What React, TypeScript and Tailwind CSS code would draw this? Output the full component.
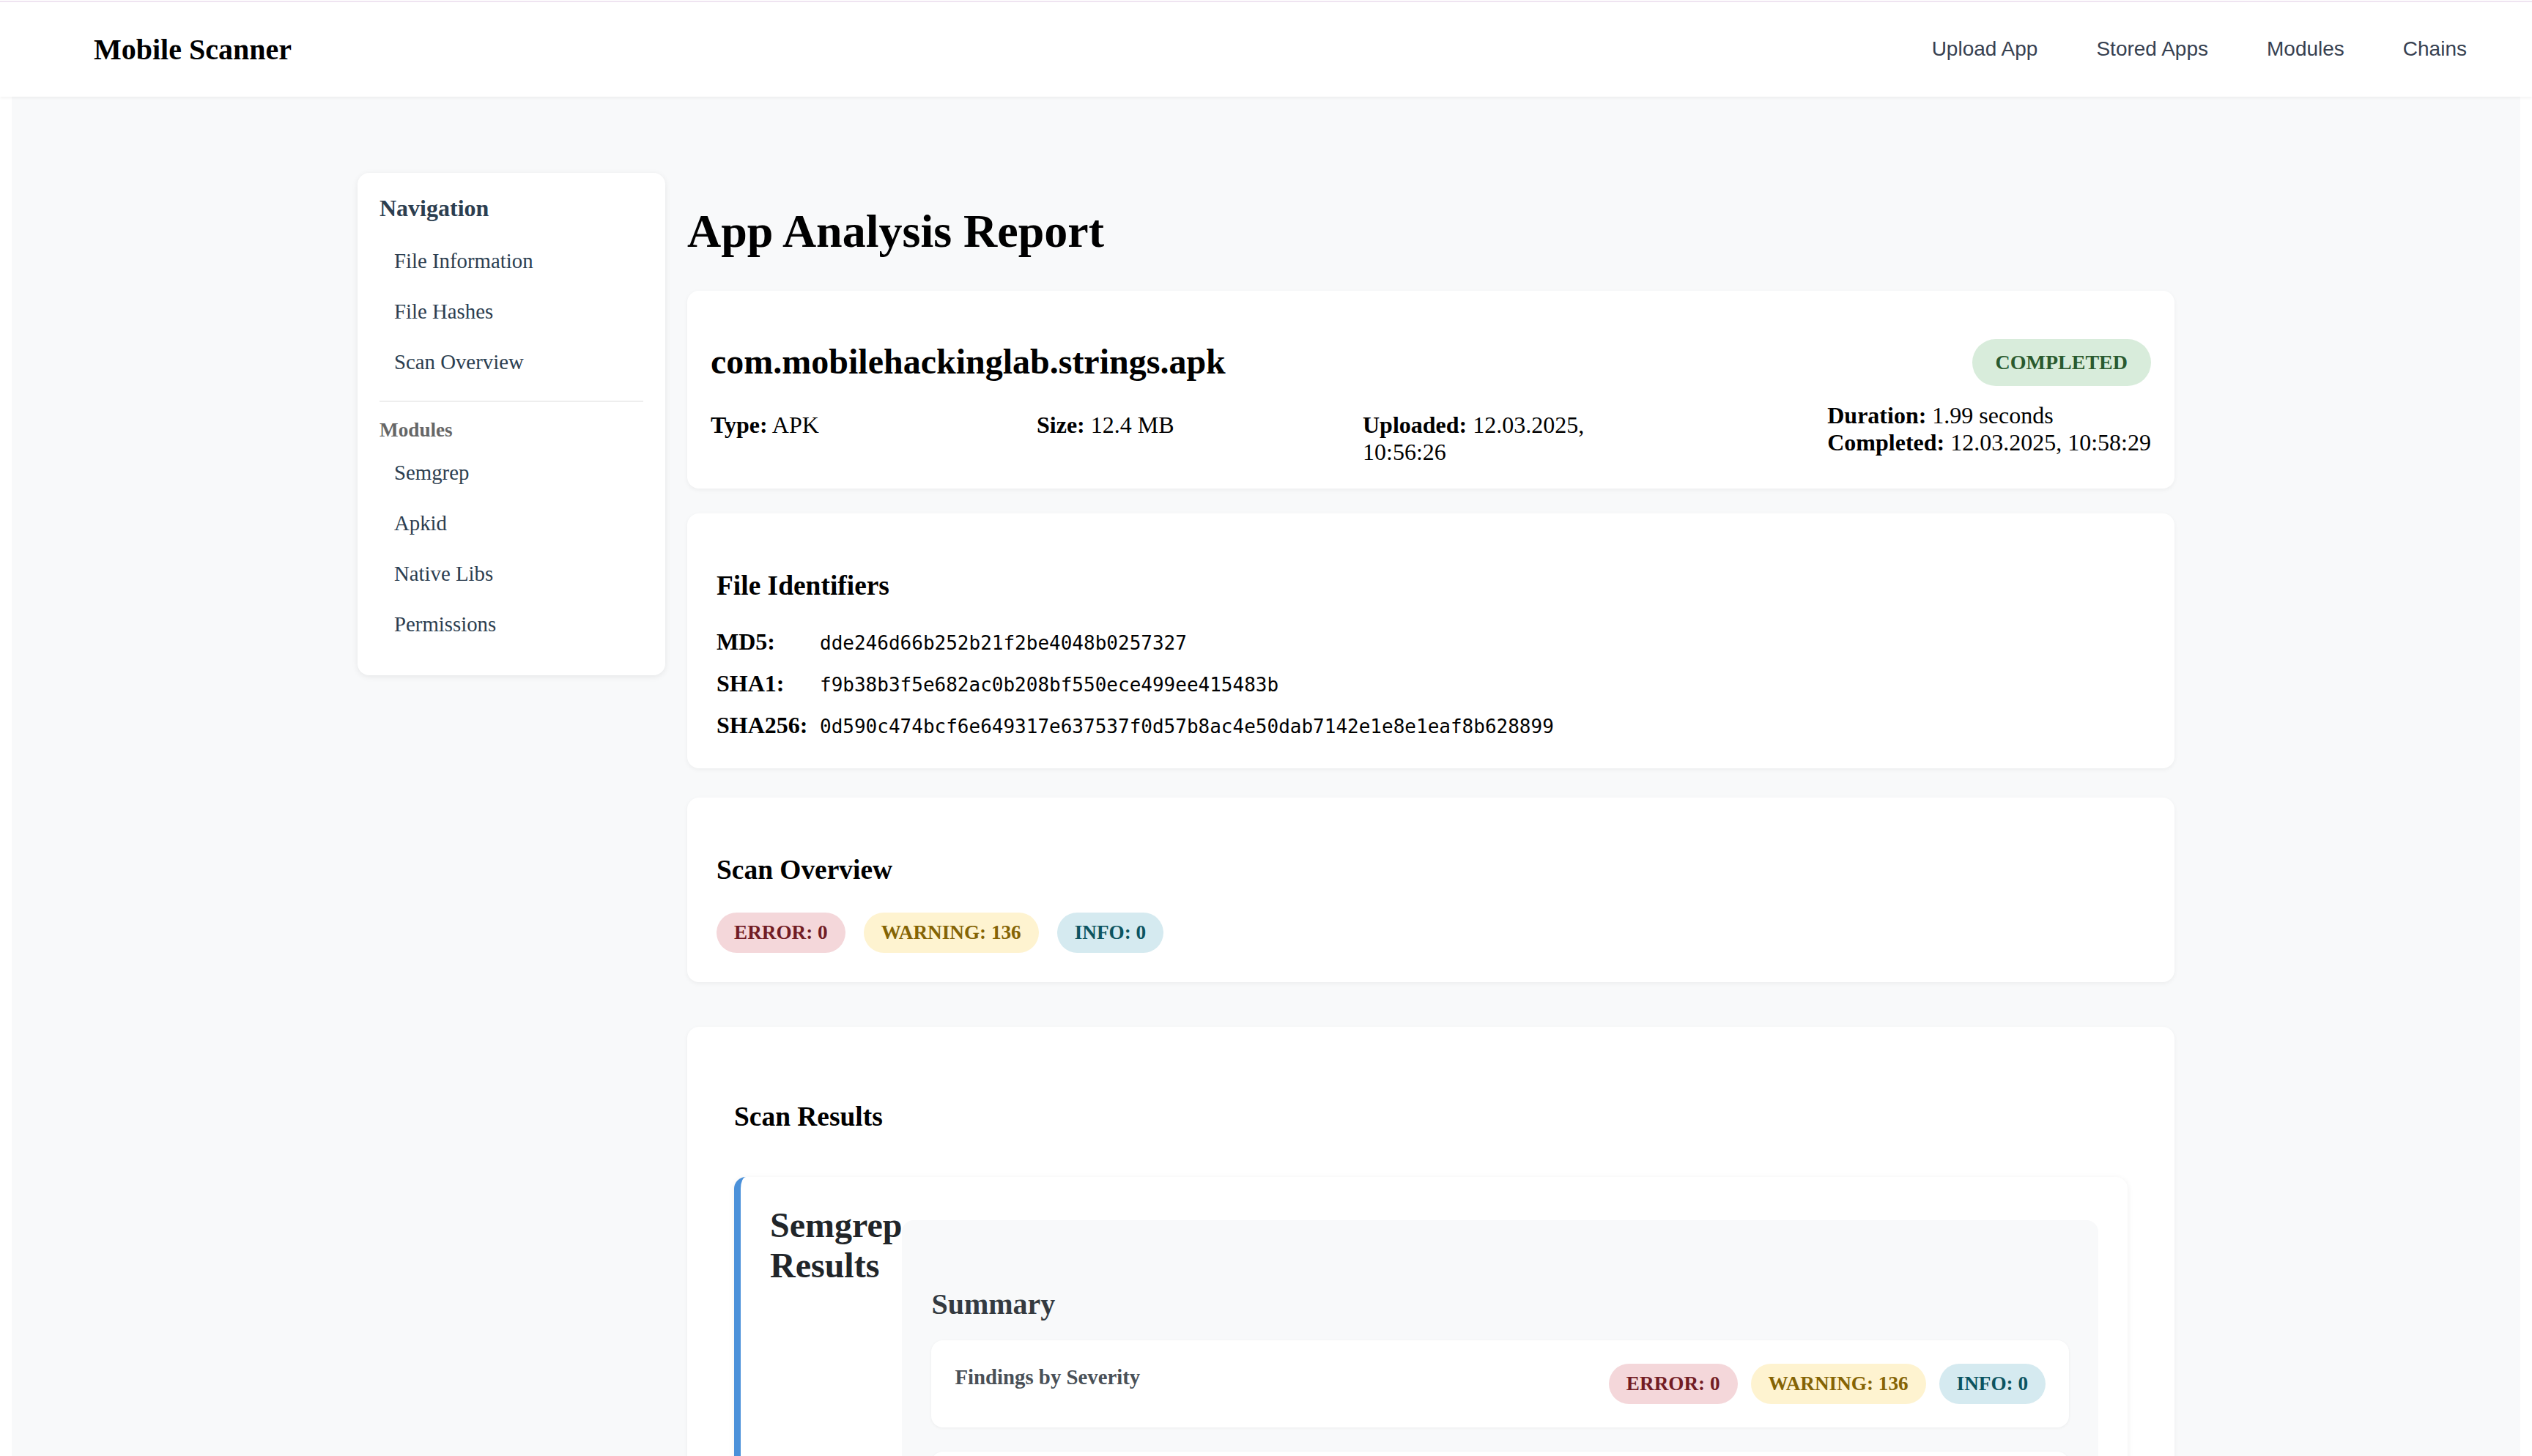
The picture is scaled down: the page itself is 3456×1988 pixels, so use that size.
import React from 'react';

type Tone = 'error' | 'warning' | 'info';

const toneClasses: Record<Tone, string> = {
  error: 'bg-[#f4d7da] text-[#721c24]',
  warning: 'bg-[#fef3d0] text-[#856404]',
  info: 'bg-[#d5eaf0] text-[#0c5460]',
};

const SeverityBadge: React.FC<{ tone: Tone; children: React.ReactNode }> = ({ tone, children }) => (
  <span className={`rounded-full px-[24px] py-[12px] text-[27.2px] font-bold leading-[1.15] ${toneClasses[tone]}`}>
    {children}
  </span>
);

const navLinks = ['Upload App', 'Stored Apps', 'Modules', 'Chains'];
const reportLinks = ['File Information', 'File Hashes', 'Scan Overview'];
const moduleLinks = ['Semgrep', 'Apkid', 'Native Libs', 'Permissions'];

const hashes = [
  { label: 'MD5:', value: 'dde246d66b252b21f2be4048b0257327' },
  { label: 'SHA1:', value: 'f9b38b3f5e682ac0b208bf550ece499ee415483b' },
  { label: 'SHA256:', value: '0d590c474bcf6e649317e637537f0d57b8ac4e50dab7142e1e8e1eaf8b628899' },
];

const Sidebar: React.FC = () => (
  <aside className="self-start rounded-2xl bg-white px-[30px] pt-[30px] pb-[35px] shadow-[0_2px_8px_rgba(0,0,0,0.08)]">
    <h3 className="text-[32px] font-bold leading-[1.15] text-[#2c3e50]">Navigation</h3>
    <ul className="mt-[19px]">
      {reportLinks.map((item) => (
        <li key={item} className="pl-[20px] text-[28.8px] leading-[69px] text-[#2c3e50]">
          {item}
        </li>
      ))}
    </ul>
    <div className="mt-[18px] h-[2px] bg-[#eeeeee]" />
    <h4 className="mt-[23px] text-[27.2px] font-bold leading-[1.15] text-[#666666]">Modules</h4>
    <ul className="mt-[8px]">
      {moduleLinks.map((item) => (
        <li key={item} className="pl-[20px] text-[28.8px] leading-[69px] text-[#2c3e50]">
          {item}
        </li>
      ))}
    </ul>
  </aside>
);

const App: React.FC = () => {
  return (
    <div className="h-screen overflow-hidden bg-white font-['Liberation_Serif',serif] text-black">
      {/* top bar */}
      <header className="relative z-10 bg-white shadow-[0_2px_4px_rgba(0,0,0,0.05)]">
        <div className="h-[1px] bg-white" />
        <div className="h-[2px] bg-[#efe4f1]" />
        <div className="flex h-[129px] items-center justify-between pl-[128px] pr-[89px]">
          <h1 className="text-[40px] font-bold leading-[1.15]">Mobile Scanner</h1>
          <nav className="flex gap-[80px] font-['Liberation_Sans',Arial,sans-serif] text-[28px] leading-[1.15] text-[#374151]">
            {navLinks.map((link) => (
              <a key={link} href="#">
                {link}
              </a>
            ))}
          </nav>
        </div>
      </header>

      <div className="mx-[16px] min-h-full bg-[#f8f9fa] pt-[104px]">
        <div className="mx-auto grid w-[2480px] grid-cols-[420px_1fr] gap-[30px]">
          <Sidebar />

          <main>
            <h1 className="mt-[43px] mb-[44px] text-[64px] font-bold leading-[1.15]">App Analysis Report</h1>

            {/* file information */}
            <section className="mb-[34px] rounded-2xl bg-white p-[32px] shadow-[0_2px_6px_rgba(0,0,0,0.05)]">
              <div className="flex items-center justify-between">
                <h2 className="mt-[37px] mb-[41px] text-[48px] font-bold leading-[1.15]">
                  com.mobilehackinglab.strings.apk
                </h2>
                <span className="rounded-full bg-[#d8ecdb] px-[32px] py-[16px] text-[28px] font-bold leading-[1.15] text-[#2a5a2e]">
                  COMPLETED
                </span>
              </div>
              <div className="flex items-start justify-between text-[32px] leading-[1.15]">
                <div className="flex gap-[45px]">
                  <div className="w-[400px]">
                    <strong>Type:</strong> APK
                  </div>
                  <div className="w-[400px]">
                    <strong>Size:</strong> 12.4 MB
                  </div>
                  <div className="w-[400px]">
                    <strong>Uploaded:</strong> 12.03.2025, 10:56:26
                  </div>
                </div>
                <div className="-mt-[13px]">
                  <div>
                    <strong>Duration:</strong> 1.99 seconds
                  </div>
                  <div>
                    <strong>Completed:</strong> 12.03.2025, 10:58:29
                  </div>
                </div>
              </div>
            </section>

            {/* hashes */}
            <section className="mb-[40px] rounded-2xl bg-white p-[40px] shadow-[0_2px_6px_rgba(0,0,0,0.05)]">
              <h3 className="my-[37px] text-[37.44px] font-bold leading-[1.15]">File Identifiers</h3>
              <div className="flex flex-col gap-[20px]">
                {hashes.map((h) => (
                  <div key={h.label} className="flex items-baseline">
                    <span className="w-[141px] shrink-0 text-[32px] font-bold leading-[1.15]">{h.label}</span>
                    <code className="font-['DejaVu_Sans_Mono',monospace] text-[26px] leading-[1.15]">{h.value}</code>
                  </div>
                ))}
              </div>
            </section>

            {/* overview */}
            <section className="mb-[61px] rounded-2xl bg-white p-[40px] shadow-[0_2px_6px_rgba(0,0,0,0.05)]">
              <h3 className="my-[37px] text-[37.44px] font-bold leading-[1.15]">Scan Overview</h3>
              <div className="flex gap-[25px]">
                <SeverityBadge tone="error">ERROR: 0</SeverityBadge>
                <SeverityBadge tone="warning">WARNING: 136</SeverityBadge>
                <SeverityBadge tone="info">INFO: 0</SeverityBadge>
              </div>
            </section>

            {/* results */}
            <section className="rounded-2xl bg-white px-[64px] pt-[64px] pb-[64px] shadow-[0_2px_6px_rgba(0,0,0,0.05)]">
              <h3 className="mt-[37px] mb-[61px] text-[37.44px] font-bold leading-[1.15]">Scan Results</h3>

              <div className="flex items-start rounded-2xl border-l-[9px] border-[#4a90d9] bg-white px-[40px] pb-[40px] shadow-[0_2px_8px_rgba(0,0,0,0.07)]">
                <h2 className="mt-[38px] w-min shrink-0 text-[48px] font-bold leading-[1.15] text-[#212529]">
                  Semgrep Results
                </h2>
                <div className="mt-[59px] flex-1 rounded-2xl bg-[#f8f9fa] px-[40px] pt-[40px] pb-[40px]">
                  <h3 className="mt-[52px] mb-[26px] text-[40px] font-bold leading-[1.15] text-[#343a40]">Summary</h3>
                  <div className="flex items-start justify-between rounded-2xl bg-white p-[32px] shadow-[0_1px_4px_rgba(0,0,0,0.05)]">
                    <h4 className="mt-[2px] text-[28.8px] font-bold leading-[1.15] text-[#495057]">Findings by Severity</h4>
                    <div className="flex gap-[18px]">
                      <SeverityBadge tone="error">ERROR: 0</SeverityBadge>
                      <SeverityBadge tone="warning">WARNING: 136</SeverityBadge>
                      <SeverityBadge tone="info">INFO: 0</SeverityBadge>
                    </div>
                  </div>
                  <div className="mt-[33px] h-[240px] rounded-2xl bg-white shadow-[0_1px_4px_rgba(0,0,0,0.05)]" />
                </div>
              </div>
            </section>
          </main>
        </div>
      </div>
    </div>
  );
};

export default App;
